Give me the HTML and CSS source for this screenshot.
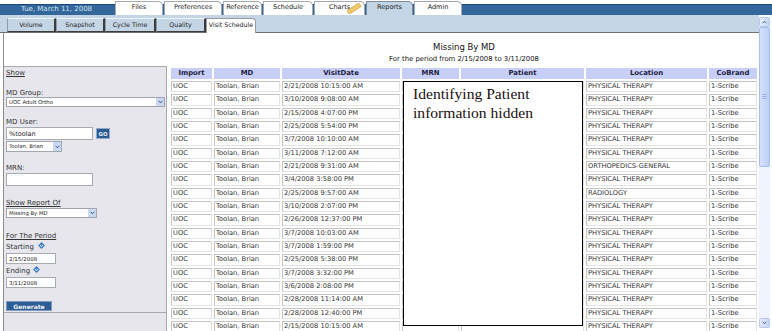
FILE: index.html
```html
<!DOCTYPE html>
<html lang="en">
<head>
    <meta charset="UTF-8">
    <meta name="viewport" content="width=device-width, initial-scale=1.0">
    <title>Missing By MD</title>
    <link rel="stylesheet" href="styles.css">
</head>
<body>
    <div class="topbar">
        <div class="today">Tue, March 11, 2008</div>
        <ul class="main-tabs">
            <li class="tab-files">Files</li>
            <li class="tab-prefs">Preferences</li>
            <li class="tab-ref">Reference</li>
            <li class="tab-schedule">Schedule</li>
            <li class="tab-charts">Charts
                <svg class="new-badge" width="16" height="11" viewBox="0 0 16 11">
                    <g transform="rotate(-33 8 5.5)">
                        <rect x="1" y="3.5" width="14" height="4.2" fill="#f2d27a" stroke="#d39a2c" stroke-width="0.7"/>
                        <path d="M4 4.2v2.8M7 4.2v2.8M10 4.2v2.8M13 4.2v2.8" stroke="#d39a2c" stroke-width="0.6"/>
                    </g>
                </svg>
            </li>
            <li class="tab-reports active">Reports</li>
            <li class="tab-admin">Admin</li>
        </ul>
    </div>

    <div class="frame">
        <div class="frame-main">
            <ul class="sub-tabs">
                <li class="st-volume">Volume</li>
                <li class="st-snapshot">Snapshot</li>
                <li class="st-cycle">Cycle Time</li>
                <li class="st-quality">Quality</li>
                <li class="st-visit active">Visit Schedule</li>
            </ul>

            <div class="report">
                <div class="report-head">
                    <h1>Missing By MD</h1>
                    <p>For the period from 2/15/2008 to 3/11/2008</p>
                </div>

                <form class="filters">
                    <div class="filter-fields">
                        <a class="filter-link">Show</a>

                        <label class="filter-label first">MD Group:</label>
                        <div class="select select-group">
                            <span class="value">UOC Adult Ortho</span>
                            <span class="arrow"><svg width="5" height="4" viewBox="0 0 5 4"><path d="M0.6 0.8L2.5 2.8L4.4 0.8" fill="none" stroke="#3f5378" stroke-width="1"/></svg></span>
                        </div>

                        <label class="filter-label">MD User:</label>
                        <div class="user-row">
                            <input type="text" class="text-input" value="%toolan">
                            <button type="button" class="go">GO</button>
                        </div>
                        <div class="select select-user">
                            <span class="value">Toolan, Brian</span>
                            <span class="arrow"><svg width="5" height="4" viewBox="0 0 5 4"><path d="M0.6 0.8L2.5 2.8L4.4 0.8" fill="none" stroke="#3f5378" stroke-width="1"/></svg></span>
                        </div>

                        <label class="filter-label mrn">MRN:</label>
                        <input type="text" class="text-input" value="">

                        <a class="filter-link report-of">Show Report Of</a>
                        <div class="select select-report">
                            <span class="value">Missing By MD</span>
                            <span class="arrow"><svg width="5" height="4" viewBox="0 0 5 4"><path d="M0.6 0.8L2.5 2.8L4.4 0.8" fill="none" stroke="#3f5378" stroke-width="1"/></svg></span>
                        </div>

                        <a class="filter-link period">For The Period</a>
                        <div class="date-label">Starting
                            <svg class="cal" width="7" height="7" viewBox="0 0 7 7"><polygon points="3.5,0 7,3.5 3.5,7 0,3.5" fill="#3f7fce"/><path d="M1.8 2.9L3.5 4.6L5.2 2.9" fill="none" stroke="#fff" stroke-width="1"/></svg>
                        </div>
                        <input type="text" class="date-input" value="2/15/2008">
                        <div class="date-label ending">Ending
                            <svg class="cal" width="7" height="7" viewBox="0 0 7 7"><polygon points="3.5,0 7,3.5 3.5,7 0,3.5" fill="#3f7fce"/><path d="M1.8 2.9L3.5 4.6L5.2 2.9" fill="none" stroke="#fff" stroke-width="1"/></svg>
                        </div>
                        <input type="text" class="date-input" value="3/11/2008">

                        <button type="button" class="generate">Generate</button>
                    </div>
                    <div class="filter-foot"></div>
                </form>

                <div class="results">
                    <table class="grid">
                        <colgroup>
                            <col class="c-import">
                            <col class="c-md">
                            <col class="c-date">
                            <col class="c-mrn">
                            <col class="c-patient">
                            <col class="c-location">
                            <col class="c-cobrand">
                        </colgroup>
                        <thead>
                            <tr><th>Import</th><th>MD</th><th>VisitDate</th><th>MRN</th><th>Patient</th><th>Location</th><th>CoBrand</th></tr>
                        </thead>
                        <tbody>
                            <tr><td>UOC</td><td>Toolan, Brian</td><td>2/21/2008 10:15:00 AM</td><td></td><td></td><td>PHYSICAL THERAPY</td><td>1-Scribe</td></tr>
                            <tr><td>UOC</td><td>Toolan, Brian</td><td>3/10/2008 9:08:00 AM</td><td></td><td></td><td>PHYSICAL THERAPY</td><td>1-Scribe</td></tr>
                            <tr><td>UOC</td><td>Toolan, Brian</td><td>2/15/2008 4:07:00 PM</td><td></td><td></td><td>PHYSICAL THERAPY</td><td>1-Scribe</td></tr>
                            <tr><td>UOC</td><td>Toolan, Brian</td><td>2/25/2008 5:54:00 PM</td><td></td><td></td><td>PHYSICAL THERAPY</td><td>1-Scribe</td></tr>
                            <tr><td>UOC</td><td>Toolan, Brian</td><td>3/7/2008 10:10:00 AM</td><td></td><td></td><td>PHYSICAL THERAPY</td><td>1-Scribe</td></tr>
                            <tr><td>UOC</td><td>Toolan, Brian</td><td>3/11/2008 7:12:00 AM</td><td></td><td></td><td>PHYSICAL THERAPY</td><td>1-Scribe</td></tr>
                            <tr><td>UOC</td><td>Toolan, Brian</td><td>2/21/2008 9:31:00 AM</td><td></td><td></td><td>ORTHOPEDICS-GENERAL</td><td>1-Scribe</td></tr>
                            <tr><td>UOC</td><td>Toolan, Brian</td><td>3/4/2008 3:58:00 PM</td><td></td><td></td><td>PHYSICAL THERAPY</td><td>1-Scribe</td></tr>
                            <tr><td>UOC</td><td>Toolan, Brian</td><td>2/25/2008 9:57:00 AM</td><td></td><td></td><td>RADIOLOGY</td><td>1-Scribe</td></tr>
                            <tr><td>UOC</td><td>Toolan, Brian</td><td>3/10/2008 2:07:00 PM</td><td></td><td></td><td>PHYSICAL THERAPY</td><td>1-Scribe</td></tr>
                            <tr><td>UOC</td><td>Toolan, Brian</td><td>2/26/2008 12:37:00 PM</td><td></td><td></td><td>PHYSICAL THERAPY</td><td>1-Scribe</td></tr>
                            <tr><td>UOC</td><td>Toolan, Brian</td><td>3/7/2008 10:03:00 AM</td><td></td><td></td><td>PHYSICAL THERAPY</td><td>1-Scribe</td></tr>
                            <tr><td>UOC</td><td>Toolan, Brian</td><td>3/7/2008 1:59:00 PM</td><td></td><td></td><td>PHYSICAL THERAPY</td><td>1-Scribe</td></tr>
                            <tr><td>UOC</td><td>Toolan, Brian</td><td>2/25/2008 5:38:00 PM</td><td></td><td></td><td>PHYSICAL THERAPY</td><td>1-Scribe</td></tr>
                            <tr><td>UOC</td><td>Toolan, Brian</td><td>3/7/2008 3:32:00 PM</td><td></td><td></td><td>PHYSICAL THERAPY</td><td>1-Scribe</td></tr>
                            <tr><td>UOC</td><td>Toolan, Brian</td><td>3/6/2008 2:08:00 PM</td><td></td><td></td><td>PHYSICAL THERAPY</td><td>1-Scribe</td></tr>
                            <tr><td>UOC</td><td>Toolan, Brian</td><td>2/28/2008 11:14:00 AM</td><td></td><td></td><td>PHYSICAL THERAPY</td><td>1-Scribe</td></tr>
                            <tr><td>UOC</td><td>Toolan, Brian</td><td>2/28/2008 12:40:00 PM</td><td></td><td></td><td>PHYSICAL THERAPY</td><td>1-Scribe</td></tr>
                            <tr><td>UOC</td><td>Toolan, Brian</td><td>2/15/2008 10:15:00 AM</td><td></td><td></td><td>PHYSICAL THERAPY</td><td>1-Scribe</td></tr>
                        </tbody>
                    </table>
                    <div class="redacted">Identifying Patient<br>information hidden</div>
                </div>
            </div>
        </div>

        <div class="scrollbar">
            <div class="sb-button"><svg width="5" height="4" viewBox="0 0 5 4"><path d="M0.6 3.2L2.5 1.2L4.4 3.2" fill="none" stroke="#4d6185" stroke-width="1"/></svg></div>
            <div class="sb-thumb"><svg width="5" height="6" viewBox="0 0 5 6"><path d="M0 0.5h5M0 2.5h5M0 4.5h5" stroke="#9fb5e3" stroke-width="1"/></svg></div>
            <div class="sb-track"></div>
            <div class="sb-button"><svg width="5" height="4" viewBox="0 0 5 4"><path d="M0.6 0.8L2.5 2.8L4.4 0.8" fill="none" stroke="#4d6185" stroke-width="1"/></svg></div>
        </div>
    </div>
</body>
</html>
```

FILE: styles.css
```css
/* General Styles */
body {
    margin: 0;
    width: 772px;
    height: 331px;
    overflow: hidden;
    background: #fff;
    font-family: "DejaVu Sans", Verdana, sans-serif;
    color: #333;
}

ul {
    list-style: none;
    margin: 0;
    padding: 0;
}

/* Top navigation */
.topbar {
    display: flex;
    align-items: flex-end;
    height: 15px;
    background: linear-gradient(to bottom, #fff 0, #fff 4px, #1c4a7c 4px, #1c4a7c 5px, #33679c 5px);
}

.today {
    width: 113px;
    height: 11px;
    line-height: 11px;
    font-size: 7px;
    color: #d6e2ef;
    text-align: center;
}

.main-tabs {
    display: flex;
    gap: 1px;
    margin-left: 2px;
}

.main-tabs li {
    position: relative;
    box-sizing: border-box;
    height: 14px;
    border: 1px solid #a3a9b0;
    border-bottom: none;
    border-radius: 0 5px 0 0;
    background: #fff;
    font-size: 6.5px;
    line-height: 11px;
    text-align: center;
    color: #222;
}

.main-tabs .active {
    background: #c4d5e5;
    border-color: #7f8e9c;
}

.tab-files { width: 48px; }
.tab-prefs { width: 58px; }
.tab-ref { width: 39px; }
.tab-schedule { width: 50px; }
.tab-charts { width: 51px; }
.tab-reports { width: 47px; }
.tab-admin { width: 48px; }

.new-badge {
    position: absolute;
    right: 2px;
    top: 1px;
}

/* Frame */
.frame {
    display: flex;
    height: 316px;
}

.frame-main {
    display: flex;
    flex-direction: column;
    width: 759px;
}

.sub-tabs {
    display: flex;
    align-items: flex-end;
    box-sizing: border-box;
    height: 18px;
    padding-left: 7px;
    background: #c4d5e5;
    border-bottom: 1px solid #6f6f6f;
}

.sub-tabs li {
    box-sizing: border-box;
    height: 14px;
    border: 1px solid;
    border-color: #eef3f8 #3c3c3c #3c3c3c #8d9cab;
    border-right-width: 2px;
    font-size: 6.3px;
    line-height: 12px;
    text-align: center;
    color: #1e1e1e;
}

.sub-tabs .active {
    height: 15px;
    margin-bottom: -1px;
    border-color: #9a9a9a;
    border-right-width: 1px;
    border-bottom: none;
    border-radius: 0 4px 0 0;
    background: #fff;
}

.st-volume { width: 49px; }
.st-snapshot { width: 49px; }
.st-cycle { width: 51px; }
.st-quality { width: 50px; }
.st-visit { width: 50px; }

/* Report */
.report {
    flex: 1;
    min-height: 0;
    display: grid;
    grid-template-columns: 163px 1fr;
    grid-template-rows: 33px 1fr;
    column-gap: 2px;
    margin-left: 3px;
    border-left: 1px solid #8c8c8c;
}

.report-head {
    grid-column: 2;
    text-align: center;
    color: #111;
}

.report-head h1 {
    margin: 9px 0 0;
    font-size: 8.5px;
    font-weight: normal;
    line-height: 11px;
}

.report-head p {
    margin: 2px 0 0;
    font-size: 6.85px;
    line-height: 9px;
}

/* Filter panel */
.filters {
    grid-column: 1;
    grid-row: 2;
    display: flex;
    flex-direction: column;
    min-height: 0;
    margin: 0;
    background: #e6e6ec;
    border-top: 1px solid #a9a9b0;
    border-right: 1px solid #a9a9b0;
    font-size: 7px;
    color: #333;
}

.filter-fields {
    box-sizing: border-box;
    height: 245px;
    padding: 2px 0 0 2px;
}

.filter-foot {
    flex: 1;
    border-top: 1px solid #a9a9b0;
}

.filter-link {
    display: block;
    line-height: 9px;
    text-decoration: underline;
}

.filter-link.report-of { margin-top: 13px; }
.filter-link.period { margin-top: 14px; }

.filter-label {
    display: block;
    margin-top: 11px;
    line-height: 8px;
}

.filter-label.mrn { margin-top: 12px; }

.select {
    display: flex;
    box-sizing: border-box;
    height: 10px;
    border: 1px solid #9fa6ad;
    background: #fff;
    font-size: 5.3px;
    color: #222;
}

.select .value {
    flex: 1;
    padding-left: 2px;
    line-height: 8px;
    white-space: nowrap;
    overflow: hidden;
}

.select .arrow {
    display: flex;
    align-items: center;
    justify-content: center;
    width: 8px;
    background: #c9d8f1;
    border-left: 1px solid #fff;
}

.select-group { width: 159px; }
.select-user { width: 56px; height: 11px; margin-top: 1px; }
.select-report { width: 91px; }

.user-row {
    display: flex;
    align-items: center;
    margin-top: 1px;
}

.text-input,
.date-input {
    display: block;
    box-sizing: border-box;
    margin: 1px 0 0;
    padding: 0 2px;
    border: 1px solid #a5acb2;
    background: #fff;
    font-family: "DejaVu Sans", Verdana, sans-serif;
    color: #222;
}

.text-input {
    width: 87px;
    height: 13px;
    font-size: 6.5px;
}

.user-row .text-input {
    margin: 0;
}

.date-input {
    width: 50px;
    height: 11px;
    font-size: 5.5px;
}

.go {
    box-sizing: border-box;
    width: 14px;
    height: 11px;
    margin-left: 3px;
    padding: 0;
    border: 1px solid #8fa9cf;
    background: #2c5b90;
    color: #e4ecf6;
    font-family: "DejaVu Sans", Verdana, sans-serif;
    font-size: 5.3px;
    font-weight: bold;
}

.date-label {
    display: flex;
    align-items: flex-start;
    gap: 4px;
    margin-top: 2px;
    line-height: 9px;
}

.date-label.ending {
    gap: 3px;
    margin-top: 3px;
}

.cal {
    margin-top: -1px;
}

.generate {
    display: block;
    box-sizing: border-box;
    width: 46px;
    height: 10px;
    margin-top: 13px;
    padding: 0;
    border: 1px solid #7c9cc6;
    background: #2d5d94;
    color: #f0f4fa;
    font-family: "DejaVu Sans", Verdana, sans-serif;
    font-size: 6px;
    font-weight: bold;
}

/* Results grid */
.results {
    grid-column: 2;
    grid-row: 2;
    position: relative;
    overflow: hidden;
}

.grid {
    width: 100%;
    table-layout: fixed;
    border-spacing: 2px;
    font-size: 6.7px;
    color: #333;
}

.c-import { width: 41px; }
.c-md { width: 66px; }
.c-date { width: 118px; }
.c-mrn { width: 57px; }
.c-patient { width: 123px; }
.c-location { width: 121px; }
.c-cobrand { width: 48px; }

.grid th {
    height: 11px;
    padding: 0;
    background: #c8cff7;
    color: #1c1c3e;
    font-size: 6.9px;
    font-weight: bold;
    line-height: 11px;
}

.grid td {
    padding: 0 0 0 1px;
    border: 1px solid;
    border-color: #c4c4c4 #e3e3e3 #e3e3e3 #c4c4c4;
    background: #fff;
    line-height: 9.33px;
    white-space: nowrap;
    overflow: hidden;
}

.redacted {
    position: absolute;
    left: 234px;
    top: 15px;
    box-sizing: border-box;
    width: 180px;
    height: 245px;
    padding: 2px 0 0 9px;
    border: 1px solid #000;
    background: #fff;
    font-family: "Liberation Serif", "Times New Roman", serif;
    font-size: 15.6px;
    line-height: 19px;
    color: #1a1010;
}

/* Scrollbar */
.scrollbar {
    display: flex;
    flex-direction: column;
    width: 11px;
    margin: 2px 2px 3px 0;
    background: #eef3fd;
}

.sb-button,
.sb-thumb {
    display: flex;
    align-items: center;
    justify-content: center;
    box-sizing: border-box;
    border-radius: 2px;
}

.sb-button {
    height: 10px;
    border: 1px solid #b8c9ee;
    background: linear-gradient(to right, #e3ecfd, #c6d6f6);
}

.sb-thumb {
    height: 140px;
    border: 1px solid #a8bfee;
    background: linear-gradient(to right, #d4e1fb, #bcd0f6);
}

.sb-track {
    flex: 1;
}
```
